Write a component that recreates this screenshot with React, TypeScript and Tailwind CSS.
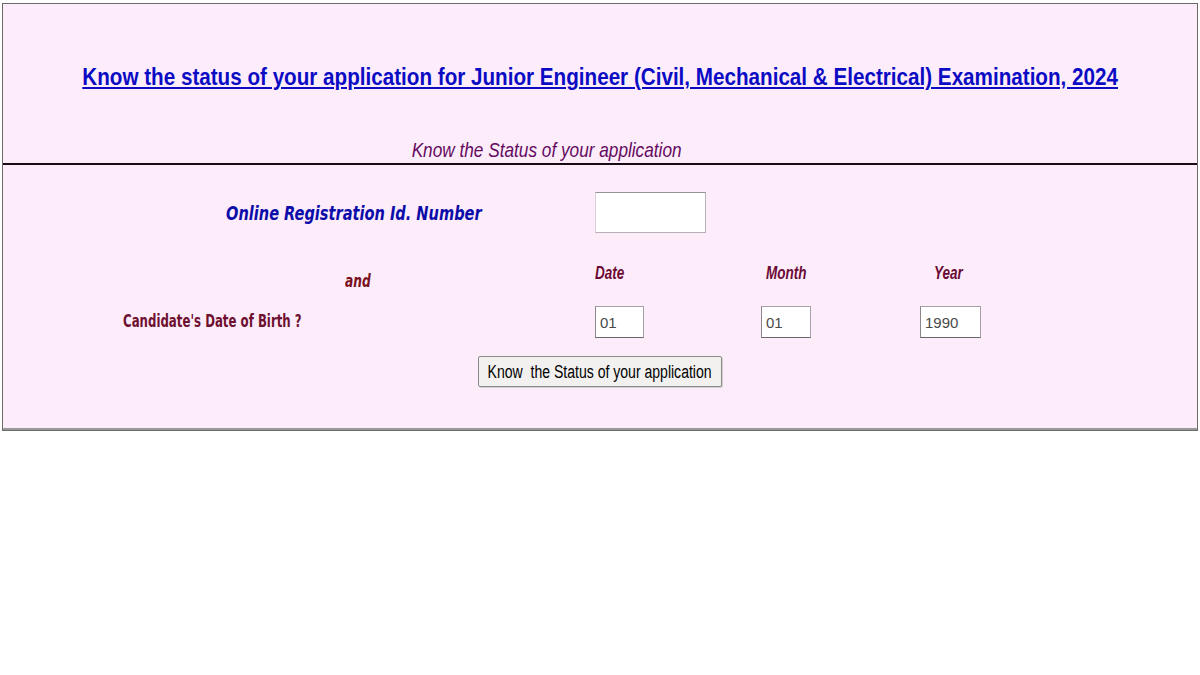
import { useState } from "react";

export default function App() {
  const [regId, setRegId] = useState("");
  const [day, setDay] = useState("01");
  const [month, setMonth] = useState("01");
  const [year, setYear] = useState("1990");

  const dob = [
    { value: day, set: setDay, width: "w-[49px]" },
    { value: month, set: setMonth, width: "w-[50px]" },
    { value: year, set: setYear, width: "w-[61px]" },
  ];

  return (
    <div className="w-[1200px] h-[675px] bg-white pt-[3px] pl-[2px]">
      <div className="w-[1196px] overflow-hidden border border-[#6b6b6b] bg-[#fdedfb]">
        {/* heading */}
        <div className="h-[161px] flex flex-col items-center border-b-2 border-[#1a0a14]">
          <a
            href="#"
            className="mt-[58px] inline-block shrink-0 whitespace-nowrap scale-x-[0.86] font-['Liberation_Sans',Arial,sans-serif] text-[24px] font-bold text-[#0b0bc4] underline underline-offset-2 leading-[30px]"
          >
            Know the status of your application for Junior Engineer (Civil, Mechanical &amp; Electrical) Examination, 2024
          </a>
          <div className="mt-[45px] ml-[-106px] inline-block shrink-0 whitespace-nowrap scale-x-[0.82] font-['Liberation_Sans',Arial,sans-serif] text-[21px] italic text-[#640a60] leading-[26px]">
            Know the Status of your application
          </div>
        </div>

        {/* form */}
        <div className="pt-[27px] pb-[41px] grid grid-cols-[592px_166px_159px_1fr] content-start border-b-2 border-[#9a9a9a]">
          <div className="h-[41px] flex items-center pl-[223px]">
            <span className="inline-block origin-left scale-x-[0.81] whitespace-nowrap font-['DejaVu_Sans_Condensed','DejaVu_Sans',sans-serif] text-[20px] font-bold italic text-[#0c0ca8]">
              Online Registration Id. Number
            </span>
          </div>
          <div className="col-span-3 flex items-center">
            <input
              value={regId}
              onChange={(e) => setRegId(e.target.value)}
              className="w-[111px] h-[41px] bg-white border border-[#b8b0b8] border-t-[#9a929a] border-l-[#d8d0d8] outline-none px-1"
            />
          </div>

          <div className="h-[73px] pt-[36px] pl-[342px] leading-[24px]">
            <span className="inline-block origin-left scale-x-[0.8] font-['DejaVu_Sans_Condensed','DejaVu_Sans',sans-serif] text-[17px] font-bold italic text-[#7a1020]">
              and
            </span>
          </div>
          <div className="h-[73px] pt-[28px] leading-[24px]">
            <span className="inline-block origin-left scale-x-[0.75] font-['Liberation_Sans',Arial,sans-serif] text-[18px] font-bold italic text-[#6b0a35]">
              Date
            </span>
          </div>
          <div className="h-[73px] pt-[28px] pl-[5px] leading-[24px]">
            <span className="inline-block origin-left scale-x-[0.75] font-['Liberation_Sans',Arial,sans-serif] text-[18px] font-bold italic text-[#6b0a35]">
              Month
            </span>
          </div>
          <div className="h-[73px] pt-[28px] pl-[14px] leading-[24px]">
            <span className="inline-block origin-left scale-x-[0.75] font-['Liberation_Sans',Arial,sans-serif] text-[18px] font-bold italic text-[#6b0a35]">
              Year
            </span>
          </div>

          <div className="h-[32px] flex items-center pl-[120px]">
            <span className="inline-block origin-left scale-x-[0.77] whitespace-nowrap font-['DejaVu_Sans_Condensed','DejaVu_Sans',sans-serif] text-[17px] font-bold text-[#6e1030]">
              Candidate's Date of Birth ?
            </span>
          </div>
          {dob.map((f, i) => (
            <div key={i} className="h-[32px] flex items-center">
              <input
                value={f.value}
                onChange={(e) => f.set(e.target.value)}
                className={`${f.width} h-[32px] bg-white border border-[#a8a0a8] border-b-[#6a666a] border-l-[#8a868a] outline-none pl-[4px] font-['Liberation_Sans',Arial,sans-serif] text-[15px] text-[#4a4a4a]`}
              />
            </div>
          ))}

          <div className="col-span-4 flex justify-center pt-[18px]">
            <button
              type="button"
              className="w-[244px] h-[31px] flex items-center justify-center bg-[#f2f1f0] border border-[#8a8a8a] rounded-[2px] shadow-[1px_1px_0_#d0d0d0]"
            >
              <span className="inline-block shrink-0 whitespace-nowrap scale-x-[0.78] font-['Liberation_Sans',Arial,sans-serif] text-[18px] text-black leading-none">
                Know&nbsp; the Status of your application
              </span>
            </button>
          </div>
        </div>
      </div>
    </div>
  );
}
